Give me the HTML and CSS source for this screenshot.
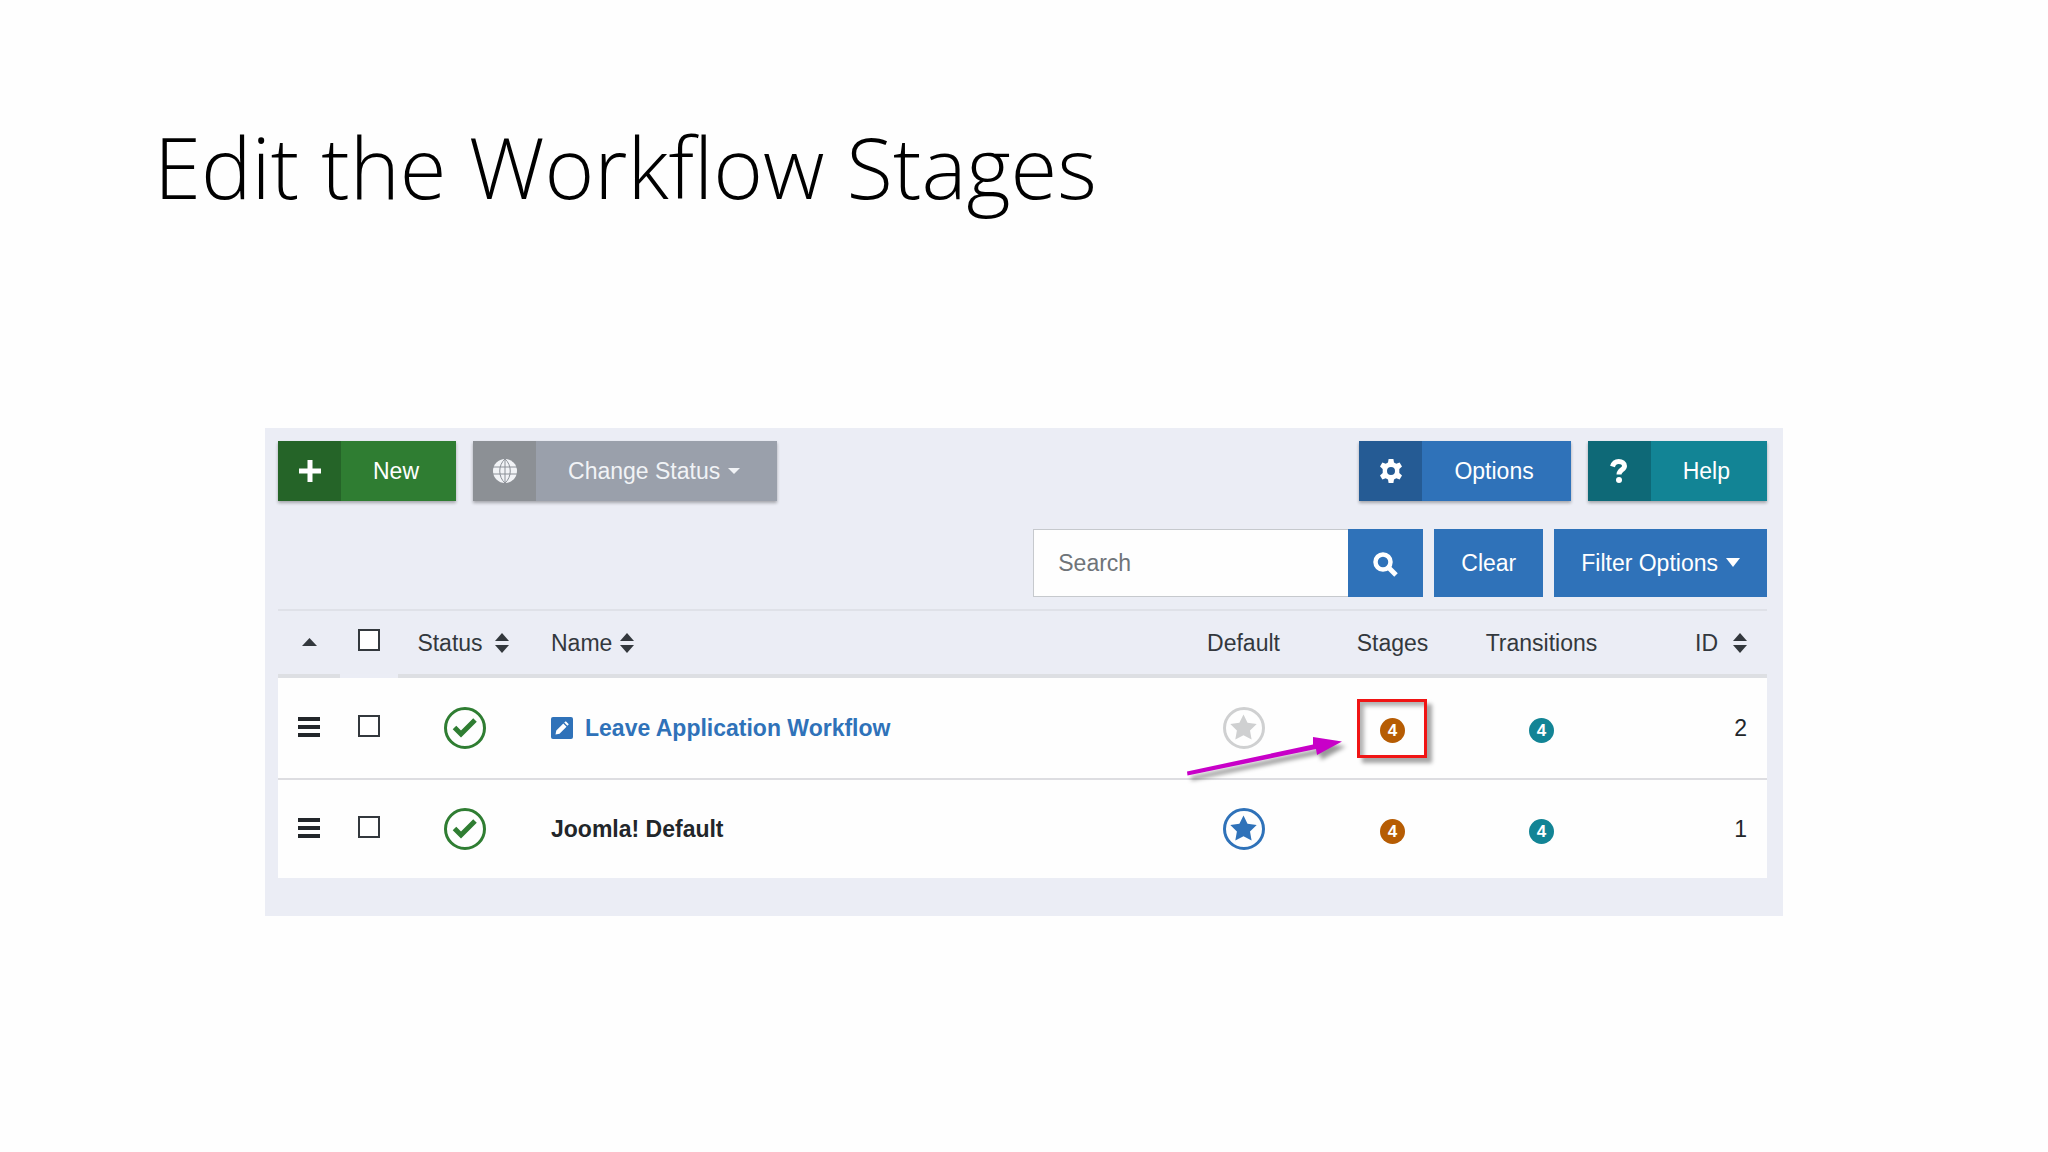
FILE: index.html
```html
<!DOCTYPE html>
<html lang="en">
  <head>
    <meta charset="utf-8">
    <title>Edit the Workflow Stages</title>
    <link rel="stylesheet" href="styles.css">
  </head>
  <body>
    <svg class="defs" aria-hidden="true">
      <symbol id="sort" viewBox="0 0 14 20">
        <path d="M7 0l7 8H0zM0 12h14l-7 8z"/>
      </symbol>
      <symbol id="bars" viewBox="0 0 22 20">
        <path d="M0 0h22v4H0zM0 8h22v4H0zM0 16h22v4H0z"/>
      </symbol>
      <symbol id="check" viewBox="0 0 42 42">
        <circle cx="21" cy="21" r="19.5" fill="none" stroke="currentColor" stroke-width="3"/>
        <path d="M10.500 20.500l6.500 6.500L31 13" fill="none" stroke="currentColor" stroke-width="5"/>
      </symbol>
      <symbol id="star" viewBox="0 0 42 42">
        <circle cx="21" cy="21" r="19.5" fill="none" stroke="currentColor" stroke-width="3"/>
        <path d="M20.500 7.500l4 8.300 9.200 1.300-6.700 6.400 1.600 9.100-8.100-4.300-8.200 4.300 1.600-9.100-6.600-6.400 9.100-1.300z" stroke="none"/>
      </symbol>
    </svg>
    <main class="slide">
      <h1 class="slide-title">Edit the Workflow Stages</h1>
      <section class="panel">
        <div class="toolbar">
          <button class="tool tool-new" type="button">
            <span class="tool-icon"><svg width="22" height="22" viewBox="0 0 22 22"><path d="M8.500 0h5v8.500H22v5h-8.500V22h-5v-8.500H0v-5h8.500z"/></svg></span>
            <span class="tool-text">New</span>
          </button>
          <button class="tool tool-status" type="button">
            <span class="tool-icon"><svg width="24" height="24" viewBox="0 0 24 24"><circle cx="12" cy="12" r="12"/><path class="globe-lines" d="M0 8h24M0 15h24M12 0v24M12 0C5 6 5 18 12 24M12 0c7 6 7 18 0 24"/></svg></span>
            <span class="tool-text">Change Status<svg class="caret" width="12" height="6" viewBox="0 0 12 6"><path d="M0 0h12L6 6z"/></svg></span>
          </button>
          <button class="tool tool-options" type="button">
            <span class="tool-icon"><svg width="24" height="24" viewBox="0 0 24 24"><path fill-rule="evenodd" d="M9.600 0h4.800l.6 3.400 2.300 1.300 3.300-1.200L23 7.600l-2.700 2.300v4.200l2.700 2.300-2.400 4.100-3.300-1.200-2.300 1.300-.6 3.400H9.600L9 20.600l-2.300-1.300-3.300 1.200L1 16.400l2.700-2.300V9.900L1 7.600l2.400-4.100 3.300 1.200L9 3.400zM12 8a4 4 0 1 0 0 8 4 4 0 0 0 0-8z"/></svg></span>
            <span class="tool-text">Options</span>
          </button>
          <button class="tool tool-help" type="button">
            <span class="tool-icon"><svg width="18" height="24" viewBox="0 0 18 24"><path d="M2.500 7.500C3.500 4 5.500 2.500 8.700 2.500c3.300 0 5.800 1.700 5.800 4.500 0 4-5.500 3.800-5.500 8.500" fill="none" stroke="currentColor" stroke-width="5"/><circle cx="9" cy="21" r="3"/></svg></span>
            <span class="tool-text">Help</span>
          </button>
        </div>
        <form class="filters">
          <div class="search">
            <input class="search-field" type="text" placeholder="Search" aria-label="Search">
            <button class="btn btn-search" type="button" aria-label="Search">
              <svg width="25" height="25" viewBox="0 0 25 25"><circle cx="10" cy="10" r="7.500" fill="none" stroke="currentColor" stroke-width="4.500"/><path d="M15.500 15.500l7.500 7.500" stroke="currentColor" stroke-width="5"/></svg>
            </button>
          </div>
          <button class="btn" type="button">Clear</button>
          <button class="btn" type="button">Filter Options<svg class="caret" width="14" height="9" viewBox="0 0 14 9"><path d="M0 0h14L7 9z"/></svg></button>
        </form>
        <table class="list">
          <thead>
            <tr>
              <th class="col-order"><svg width="15" height="8" viewBox="0 0 15 8"><path d="M7.500 0L15 8H0z"/></svg></th>
              <th class="col-check"><input class="check" type="checkbox" aria-label="Check all items"></th>
              <th class="col-status">Status<svg class="sort" width="14" height="20"><use href="#sort"/></svg></th>
              <th class="col-name">Name<svg class="sort sort-near" width="14" height="20"><use href="#sort"/></svg></th>
              <th class="col-count">Default</th>
              <th class="col-count">Stages</th>
              <th class="col-count">Transitions</th>
              <th class="col-id">ID<svg class="sort sort-far" width="14" height="20"><use href="#sort"/></svg></th>
            </tr>
          </thead>
          <tbody>
            <tr>
              <td class="col-order"><svg width="22" height="20"><use href="#bars"/></svg></td>
              <td class="col-check"><input class="check" type="checkbox" aria-label="Select Leave Application Workflow"></td>
              <td class="col-status"><svg class="published" width="42" height="42"><use href="#check"/></svg></td>
              <td class="col-name">
                <a class="item-link" href="#"><svg width="22" height="22" viewBox="0 0 22 22"><rect width="22" height="22" rx="2"/><path class="pencil" d="M4.500 17.500l.8-4 7-7 3.200 3.200-7 7zM13.200 5.600l1.600-1.300 3 3-1.400 1.500z"/></svg>Leave Application Workflow</a>
              </td>
              <td class="col-count"><svg class="not-default" width="42" height="42"><use href="#star"/></svg></td>
              <td class="col-count marked">
                <a class="badge badge-stages" href="#">4</a>
                <span class="mark-box"></span>
                <svg class="mark-arrow" width="170" height="50" viewBox="0 0 170 50"><path d="M2 37.500L128 10.500V3l29 4.500L132 21l-1-6L2.500 41.500z"/></svg>
              </td>
              <td class="col-count"><a class="badge badge-transitions" href="#">4</a></td>
              <td class="col-id">2</td>
            </tr>
            <tr>
              <td class="col-order"><svg width="22" height="20"><use href="#bars"/></svg></td>
              <td class="col-check"><input class="check" type="checkbox" aria-label="Select Joomla! Default"></td>
              <td class="col-status"><svg class="published" width="42" height="42"><use href="#check"/></svg></td>
              <td class="col-name">Joomla! Default</td>
              <td class="col-count"><svg class="is-default" width="42" height="42"><use href="#star"/></svg></td>
              <td class="col-count"><a class="badge badge-stages" href="#">4</a></td>
              <td class="col-count"><a class="badge badge-transitions" href="#">4</a></td>
              <td class="col-id">1</td>
            </tr>
          </tbody>
        </table>
      </section>
    </main>
  </body>
</html>
```

FILE: styles.css
```css
* {
  box-sizing: border-box;
}

body {
  margin: 0;
  background: #fefefe;
  color: #22262a;
  font: 23px/28px "Liberation Sans", Arial, sans-serif;
}

svg {
  display: inline-block;
  vertical-align: middle;
  fill: currentColor;
}

.defs {
  display: none;
}

.slide {
  padding: 108px 265px 0;
}

.slide-title {
  margin: 0 0 204px -111px;
  color: #000;
  font: 300 85px/116px "Open Sans", "Noto Sans", sans-serif;
  font-variant-ligatures: none;
}

.panel {
  padding: 13px 16px 38px 13px;
  background: #ebedf5;
}

button,
input {
  font: inherit;
}

button {
  border: 0;
  padding: 0;
  color: #fff;
}

/* Toolbar */
.toolbar {
  display: flex;
  gap: 17px;
}

.tool {
  display: flex;
  height: 60px;
  box-shadow: 0 2px 3px rgba(0, 0, 0, .3);
}

.tool-icon {
  display: flex;
  align-items: center;
  justify-content: center;
  width: 63px;
  height: 100%;
  background: rgba(0, 0, 0, .2);
}

.tool-text {
  padding: 0 37px 0 32px;
  line-height: 60px;
}

.tool-new {
  background: #2f7d32;
}

.tool-status {
  background: #9aa0ab;
  color: #f1f3f6;
}

.tool-status .tool-icon {
  background: rgba(110, 110, 100, .3);
}

.tool-status .globe-lines {
  fill: none;
  stroke: #8b9097;
}

.tool-options {
  margin-left: auto;
  background: #2f72b9;
}

.tool-help {
  background: #128495;
}

.caret {
  margin-left: 8px;
  margin-top: -4px;
}

/* Search row */
.filters {
  display: flex;
  justify-content: flex-end;
  gap: 11px;
  margin: 28px 0 12px;
}

.search {
  display: flex;
  width: 390px;
}

.search-field {
  flex: 1;
  min-width: 0;
  padding: 0 24px;
  border: 1px solid #c6c9cd;
  border-right: 0;
  border-radius: 0;
  background: #fefefe;
}

.search-field::placeholder {
  color: #6f7479;
  opacity: 1;
}

.btn {
  height: 68px;
  padding: 0 27px;
  background: #2f72b9;
}

.btn-search {
  padding: 0 25px;
}

/* Workflow list */
.list {
  width: 100%;
  table-layout: fixed;
  border-collapse: separate;
  border-spacing: 0;
}

.list th,
.list td {
  padding: 0;
  text-align: center;
}

.list th {
  height: 69px;
  border-top: 2px solid #dfe1e8;
  border-bottom: 4px solid #dddfe3;
  color: #33383d;
  font-weight: normal;
}

.list th.col-check {
  border-bottom-color: #ebedf5;
}

.list td {
  height: 100px;
  background: #fefefe;
}

.list tr + tr td {
  border-top: 2px solid #dddde1;
}

.list .col-order {
  width: 62px;
}

.list .col-order svg {
  margin-top: -5px;
}

.list .col-check {
  width: 58px;
}

.list .col-status {
  width: 134px;
}

.list th.col-status {
  padding-right: 4px;
}

.list .col-name {
  padding-left: 19px;
  text-align: left;
}

.list td.col-name {
  font-weight: bold;
}

.list .col-count {
  width: 149px;
}

.list .col-id {
  width: 151px;
  padding-right: 20px;
  text-align: right;
}

.check {
  appearance: none;
  width: 22px;
  height: 22px;
  margin: 0 0 6px;
  border: 2px solid #33383d;
  background: #fff;
  vertical-align: middle;
}

.sort {
  margin: -3px 0 0 12px;
}

.sort-near {
  margin-left: 8px;
}

.sort-far {
  margin-left: 15px;
}

.item-link {
  color: #2f72b9;
  text-decoration: none;
}

.item-link svg {
  margin: -4px 12px 0 0;
}

.pencil {
  fill: #fff;
}

.published {
  color: #2f7d32;
}

.not-default {
  color: #cfd0d1;
}

.is-default {
  color: #2f72b9;
}

.badge {
  display: inline-block;
  width: 25px;
  height: 25px;
  border-radius: 50%;
  color: #fff;
  font-size: 17px;
  font-weight: bold;
  line-height: 25px;
  text-decoration: none;
}

.badge-stages {
  background: #b65c03;
}

.badge-transitions {
  background: #128495;
}

/* Callout drawn over the stages cell */
.marked {
  position: relative;
}

.mark-box {
  position: absolute;
  top: 21px;
  left: 39px;
  width: 70px;
  height: 59px;
  border: 3px solid #f01414;
  box-shadow: 5px 5px 4px rgba(0, 0, 0, .35), inset 4px 4px 4px rgba(0, 0, 0, .3);
  pointer-events: none;
}

.mark-arrow {
  position: absolute;
  top: 56px;
  left: -133px;
  z-index: 1;
  color: #c800c8;
  filter: drop-shadow(4px 5px 2px rgba(0, 0, 0, .4));
  pointer-events: none;
}
```
